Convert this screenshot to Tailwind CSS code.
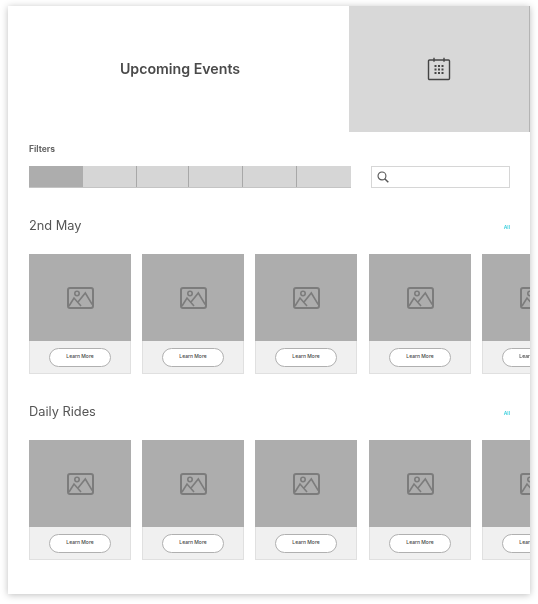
<!DOCTYPE html>
<html lang="en">

<head>
    <meta charset="UTF-8">
    <meta name="viewport" content="width=device-width, initial-scale=1.0">
    <title>Upcoming Events</title>
    <script src="https://cdn.jsdelivr.net/npm/@tailwindcss/browser@4"></script>
</head>

<body class="bg-white w-[538px] h-[604px] overflow-hidden font-['Inter',sans-serif]">
    <div class="ml-2 mt-1.5 w-[522px] h-[588px] bg-white shadow-[0_1px_7px_rgba(0,0,0,0.26)] overflow-hidden blur-[0.35px]">
        <!-- header -->
        <div class="flex h-[126px]">
            <div class="w-[341px] flex items-center justify-center pl-[3px]">
                <h1 class="text-[14.2px] font-semibold text-[#4a4a4a]">Upcoming Events</h1>
            </div>
            <div class="flex-1 bg-[#d8d8d8] border-r border-[#b4b4b4] flex items-center justify-center">
                <svg class="w-6 h-6" viewBox="0 0 24 24" fill="none" stroke="#444" stroke-width="1.4">
                    <rect x="1.5" y="3" width="21" height="19.5" rx="1" />
                    <path d="M7 .8v4M17 .8v4" />
                    <g fill="#444" stroke="none">
                        <rect x="7.5" y="8" width="2" height="2" />
                        <rect x="11" y="8" width="2" height="2" />
                        <rect x="14.5" y="8" width="2" height="2" />
                        <rect x="7.5" y="11.5" width="2" height="2" />
                        <rect x="11" y="11.5" width="2" height="2" />
                        <rect x="14.5" y="11.5" width="2" height="2" />
                        <rect x="7.5" y="15" width="2" height="2" />
                        <rect x="11" y="15" width="2" height="2" />
                        <rect x="14.5" y="15" width="2" height="2" />
                    </g>
                </svg>
            </div>
        </div>

        <!-- filters -->
        <div class="pl-[21px] pt-[11px]">
            <p class="text-[8.5px] leading-[12px] font-bold text-[#666]">Filters</p>
            <div class="flex items-start mt-[11px]">
                <div class="flex w-[322px] h-[22px] bg-[#d6d6d6] border-b border-[#c4c4c4]">
                    <div class="w-[54px] bg-[#adadad]"></div>
                    <div class="w-[54px] border-r border-[#a8a8a8]"></div>
                    <div class="w-[52px] border-r border-[#a8a8a8]"></div>
                    <div class="w-[54px] border-r border-[#a8a8a8]"></div>
                    <div class="w-[54px] border-r border-[#a8a8a8]"></div>
                    <div class="w-[54px]"></div>
                </div>
                <div class="ml-5 w-[139px] h-[22px] border border-[#d6d6d6] bg-white flex items-center pl-[5px]">
                    <svg class="w-3 h-3" viewBox="0 0 14 14" fill="none" stroke="#555" stroke-width="1.3">
                        <circle cx="5.8" cy="5.8" r="4.6" />
                        <path d="M9 9l4.2 4.2" stroke-width="1.7" />
                    </svg>
                </div>
            </div>
        </div>

        <!-- 2nd May -->
        <section class="pl-[21px] mt-[29px]">
            <div class="flex items-center justify-between w-[481px] h-[18px]">
                <h2 class="text-[12.8px] font-normal text-[#555]">2nd May</h2>
                <a class="text-[5px] font-semibold text-[#3fd0de] mt-1">All</a>
            </div>
            <div class="flex gap-[11px] mt-[19px] w-[600px]">
                <div class="w-[102px] shrink-0">
                    <div class="h-[87px] bg-[#adadad] flex items-center justify-center">
                        <svg class="w-[27px] h-[22px]" viewBox="0 0 27 22" fill="none" stroke="#7c7c7c" stroke-width="2">
                            <rect x="1" y="1" width="25" height="20" rx="2" />
                            <circle cx="10" cy="6.5" r="2.2" stroke-width="1.6" />
                            <path d="M2 19l5-8 7 8M11 15l7.3-9 7 11.7" stroke-width="1.6" />
                        </svg>
                    </div>
                    <div class="h-[33px] bg-[#f0f0f0] border border-t-0 border-[#e0e0e0] flex items-center justify-center">
                        <button class="w-[62px] h-[19px] rounded-full bg-white border border-[#b0b0b0] text-[5px] font-medium text-[#444]">Learn More</button>
                    </div>
                </div>
                <div class="w-[102px] shrink-0">
                    <div class="h-[87px] bg-[#adadad] flex items-center justify-center">
                        <svg class="w-[27px] h-[22px]" viewBox="0 0 27 22" fill="none" stroke="#7c7c7c" stroke-width="2">
                            <rect x="1" y="1" width="25" height="20" rx="2" />
                            <circle cx="10" cy="6.5" r="2.2" stroke-width="1.6" />
                            <path d="M2 19l5-8 7 8M11 15l7.3-9 7 11.7" stroke-width="1.6" />
                        </svg>
                    </div>
                    <div class="h-[33px] bg-[#f0f0f0] border border-t-0 border-[#e0e0e0] flex items-center justify-center">
                        <button class="w-[62px] h-[19px] rounded-full bg-white border border-[#b0b0b0] text-[5px] font-medium text-[#444]">Learn More</button>
                    </div>
                </div>
                <div class="w-[102px] shrink-0">
                    <div class="h-[87px] bg-[#adadad] flex items-center justify-center">
                        <svg class="w-[27px] h-[22px]" viewBox="0 0 27 22" fill="none" stroke="#7c7c7c" stroke-width="2">
                            <rect x="1" y="1" width="25" height="20" rx="2" />
                            <circle cx="10" cy="6.5" r="2.2" stroke-width="1.6" />
                            <path d="M2 19l5-8 7 8M11 15l7.3-9 7 11.7" stroke-width="1.6" />
                        </svg>
                    </div>
                    <div class="h-[33px] bg-[#f0f0f0] border border-t-0 border-[#e0e0e0] flex items-center justify-center">
                        <button class="w-[62px] h-[19px] rounded-full bg-white border border-[#b0b0b0] text-[5px] font-medium text-[#444]">Learn More</button>
                    </div>
                </div>
                <div class="w-[102px] shrink-0 ml-px">
                    <div class="h-[87px] bg-[#adadad] flex items-center justify-center">
                        <svg class="w-[27px] h-[22px]" viewBox="0 0 27 22" fill="none" stroke="#7c7c7c" stroke-width="2">
                            <rect x="1" y="1" width="25" height="20" rx="2" />
                            <circle cx="10" cy="6.5" r="2.2" stroke-width="1.6" />
                            <path d="M2 19l5-8 7 8M11 15l7.3-9 7 11.7" stroke-width="1.6" />
                        </svg>
                    </div>
                    <div class="h-[33px] bg-[#f0f0f0] border border-t-0 border-[#e0e0e0] flex items-center justify-center">
                        <button class="w-[62px] h-[19px] rounded-full bg-white border border-[#b0b0b0] text-[5px] font-medium text-[#444]">Learn More</button>
                    </div>
                </div>
                <div class="w-[102px] shrink-0">
                    <div class="h-[87px] bg-[#adadad] flex items-center justify-center">
                        <svg class="w-[27px] h-[22px]" viewBox="0 0 27 22" fill="none" stroke="#7c7c7c" stroke-width="2">
                            <rect x="1" y="1" width="25" height="20" rx="2" />
                            <circle cx="10" cy="6.5" r="2.2" stroke-width="1.6" />
                            <path d="M2 19l5-8 7 8M11 15l7.3-9 7 11.7" stroke-width="1.6" />
                        </svg>
                    </div>
                    <div class="h-[33px] bg-[#f0f0f0] border border-t-0 border-[#e0e0e0] flex items-center justify-center">
                        <button class="w-[62px] h-[19px] rounded-full bg-white border border-[#b0b0b0] text-[5px] font-medium text-[#444]">Learn More</button>
                    </div>
                </div>
            </div>
        </section>

        <!-- Daily Rides -->
        <section class="pl-[21px] mt-[29px]">
            <div class="flex items-center justify-between w-[481px] h-[18px]">
                <h2 class="text-[12.8px] font-normal text-[#555]">Daily Rides</h2>
                <a class="text-[5px] font-semibold text-[#3fd0de] mt-1">All</a>
            </div>
            <div class="flex gap-[11px] mt-[19px] w-[600px]">
                <div class="w-[102px] shrink-0">
                    <div class="h-[87px] bg-[#adadad] flex items-center justify-center">
                        <svg class="w-[27px] h-[22px]" viewBox="0 0 27 22" fill="none" stroke="#7c7c7c" stroke-width="2">
                            <rect x="1" y="1" width="25" height="20" rx="2" />
                            <circle cx="10" cy="6.5" r="2.2" stroke-width="1.6" />
                            <path d="M2 19l5-8 7 8M11 15l7.3-9 7 11.7" stroke-width="1.6" />
                        </svg>
                    </div>
                    <div class="h-[33px] bg-[#f0f0f0] border border-t-0 border-[#e0e0e0] flex items-center justify-center">
                        <button class="w-[62px] h-[19px] rounded-full bg-white border border-[#b0b0b0] text-[5px] font-medium text-[#444]">Learn More</button>
                    </div>
                </div>
                <div class="w-[102px] shrink-0">
                    <div class="h-[87px] bg-[#adadad] flex items-center justify-center">
                        <svg class="w-[27px] h-[22px]" viewBox="0 0 27 22" fill="none" stroke="#7c7c7c" stroke-width="2">
                            <rect x="1" y="1" width="25" height="20" rx="2" />
                            <circle cx="10" cy="6.5" r="2.2" stroke-width="1.6" />
                            <path d="M2 19l5-8 7 8M11 15l7.3-9 7 11.7" stroke-width="1.6" />
                        </svg>
                    </div>
                    <div class="h-[33px] bg-[#f0f0f0] border border-t-0 border-[#e0e0e0] flex items-center justify-center">
                        <button class="w-[62px] h-[19px] rounded-full bg-white border border-[#b0b0b0] text-[5px] font-medium text-[#444]">Learn More</button>
                    </div>
                </div>
                <div class="w-[102px] shrink-0">
                    <div class="h-[87px] bg-[#adadad] flex items-center justify-center">
                        <svg class="w-[27px] h-[22px]" viewBox="0 0 27 22" fill="none" stroke="#7c7c7c" stroke-width="2">
                            <rect x="1" y="1" width="25" height="20" rx="2" />
                            <circle cx="10" cy="6.5" r="2.2" stroke-width="1.6" />
                            <path d="M2 19l5-8 7 8M11 15l7.3-9 7 11.7" stroke-width="1.6" />
                        </svg>
                    </div>
                    <div class="h-[33px] bg-[#f0f0f0] border border-t-0 border-[#e0e0e0] flex items-center justify-center">
                        <button class="w-[62px] h-[19px] rounded-full bg-white border border-[#b0b0b0] text-[5px] font-medium text-[#444]">Learn More</button>
                    </div>
                </div>
                <div class="w-[102px] shrink-0 ml-px">
                    <div class="h-[87px] bg-[#adadad] flex items-center justify-center">
                        <svg class="w-[27px] h-[22px]" viewBox="0 0 27 22" fill="none" stroke="#7c7c7c" stroke-width="2">
                            <rect x="1" y="1" width="25" height="20" rx="2" />
                            <circle cx="10" cy="6.5" r="2.2" stroke-width="1.6" />
                            <path d="M2 19l5-8 7 8M11 15l7.3-9 7 11.7" stroke-width="1.6" />
                        </svg>
                    </div>
                    <div class="h-[33px] bg-[#f0f0f0] border border-t-0 border-[#e0e0e0] flex items-center justify-center">
                        <button class="w-[62px] h-[19px] rounded-full bg-white border border-[#b0b0b0] text-[5px] font-medium text-[#444]">Learn More</button>
                    </div>
                </div>
                <div class="w-[102px] shrink-0">
                    <div class="h-[87px] bg-[#adadad] flex items-center justify-center">
                        <svg class="w-[27px] h-[22px]" viewBox="0 0 27 22" fill="none" stroke="#7c7c7c" stroke-width="2">
                            <rect x="1" y="1" width="25" height="20" rx="2" />
                            <circle cx="10" cy="6.5" r="2.2" stroke-width="1.6" />
                            <path d="M2 19l5-8 7 8M11 15l7.3-9 7 11.7" stroke-width="1.6" />
                        </svg>
                    </div>
                    <div class="h-[33px] bg-[#f0f0f0] border border-t-0 border-[#e0e0e0] flex items-center justify-center">
                        <button class="w-[62px] h-[19px] rounded-full bg-white border border-[#b0b0b0] text-[5px] font-medium text-[#444]">Learn More</button>
                    </div>
                </div>
            </div>
        </section>
    </div>
</body>

</html>
